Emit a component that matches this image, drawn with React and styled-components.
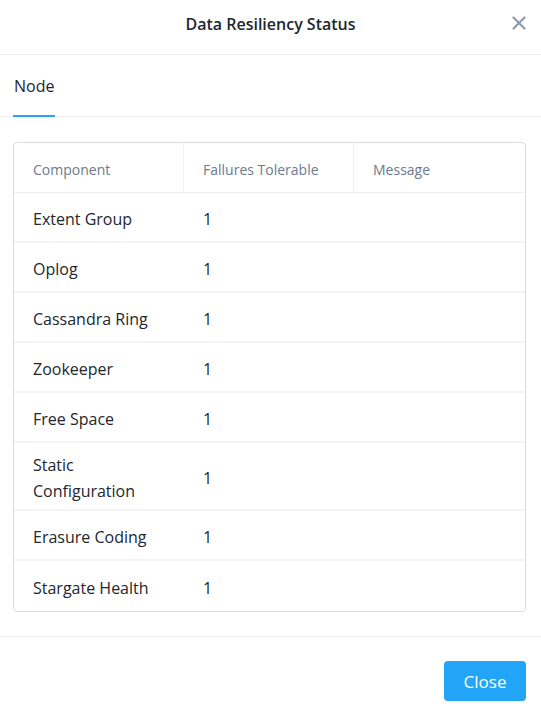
import React from "react";
import styled, { createGlobalStyle } from "styled-components";

const Global = createGlobalStyle`
  html, body { margin: 0; padding: 0; background: #fff; }
  body { font-family: "Open Sans", Lato, Arial, sans-serif; color: #22272e; }
  * { box-sizing: border-box; }
`;

const Dialog = styled.div`
  width: 541px;
  height: 711px;
  display: flex;
  flex-direction: column;
  background: #fff;
  overflow: hidden;
`;

const Header = styled.div`
  height: 55px;
  flex: none;
  display: grid;
  grid-template-columns: 1fr auto 1fr;
  align-items: center;
  border-bottom: 1px solid #eceef1;
  padding: 0 14px 0 14px;
`;

const Title = styled.h1`
  grid-column: 2;
  margin: 0;
  font-size: 16px;
  font-weight: 600;
  color: #22272e;
  padding-bottom: 6px;
`;

const CloseIcon = styled.button`
  grid-column: 3;
  justify-self: end;
  background: none;
  border: 0;
  padding: 0;
  width: 16px;
  height: 16px;
  display: flex;
  align-items: center;
  justify-content: center;
  margin-bottom: 8px;
  cursor: pointer;
`;

const Tabs = styled.div`
  height: 62px;
  flex: none;
  display: flex;
  align-items: stretch;
  padding: 0 13px;
  border-bottom: 1px solid #eceef1;
`;

const Tab = styled.div`
  display: flex;
  align-items: center;
  font-size: 16px;
  color: #22272e;
  padding: 2px 1px 0;
  border-bottom: 2px solid ${(p) => (p.$active ? "#22a5f7" : "transparent")};
  margin-bottom: -1px;
`;

const Body = styled.div`
  flex: none;
  padding: 25px 15px 24px 13px;
`;

const TableBox = styled.div`
  border: 1px solid #d9dde3;
  border-radius: 4px;
  overflow: hidden;
`;

const Row = styled.div`
  display: grid;
  grid-template-columns: 170px 170px 1fr;
  min-height: 50px;
  border-bottom: ${(p) => (p.$last ? "0" : p.$head ? "1px solid #eef0f2" : "2px solid #f3f4f6")};
`;

const HeadCell = styled.div`
  display: flex;
  align-items: center;
  padding: 3px 20px 0 19px;
  font-size: 14px;
  color: #6b7b8d;
  border-right: ${(p) => (p.$last ? "0" : "1px solid #eef0f2")};
`;

const Cell = styled.div`
  display: flex;
  align-items: center;
  padding: 9px 20px 5px 19px;
  font-size: 16px;
  line-height: 26px;
  color: #22272e;
`;

const Footer = styled.div`
  flex: 1;
  border-top: 1px solid #eceef1;
  display: flex;
  justify-content: flex-end;
  align-items: flex-start;
  padding: 24px 15px 0;
`;

const Button = styled.button`
  width: 82px;
  height: 40px;
  border: 0;
  border-radius: 4px;
  background: #22a5f7;
  color: #fff;
  font-family: inherit;
  font-size: 17px;
  font-weight: 500;
  cursor: pointer;
`;

const rows = [
  ["Extent Group", "1"],
  ["Oplog", "1"],
  ["Cassandra Ring", "1"],
  ["Zookeeper", "1"],
  ["Free Space", "1"],
  ["Static Configuration", "1"],
  ["Erasure Coding", "1"],
  ["Stargate Health", "1"],
];

export default function App() {
  return (
    <Dialog>
      <Global />
      <Header>
        <Title>Data Resiliency Status</Title>
        <CloseIcon aria-label="Close">
          <svg width="14" height="14" viewBox="0 0 14 14">
            <path d="M1.5 1.5 L12.5 12.5 M12.5 1.5 L1.5 12.5" stroke="#8d9bab" strokeWidth="2.2" strokeLinecap="round" />
          </svg>
        </CloseIcon>
      </Header>
      <Tabs>
        <Tab $active>Node</Tab>
      </Tabs>
      <Body>
        <TableBox>
          <Row $head>
            <HeadCell>Component</HeadCell>
            <HeadCell>Fallures Tolerable</HeadCell>
            <HeadCell $last>Message</HeadCell>
          </Row>
          {rows.map(([name, val], i) => (
            <Row key={name} $last={i === rows.length - 1}>
              <Cell>{name}</Cell>
              <Cell>{val}</Cell>
              <Cell />
            </Row>
          ))}
        </TableBox>
      </Body>
      <Footer>
        <Button>Close</Button>
      </Footer>
    </Dialog>
  );
}
